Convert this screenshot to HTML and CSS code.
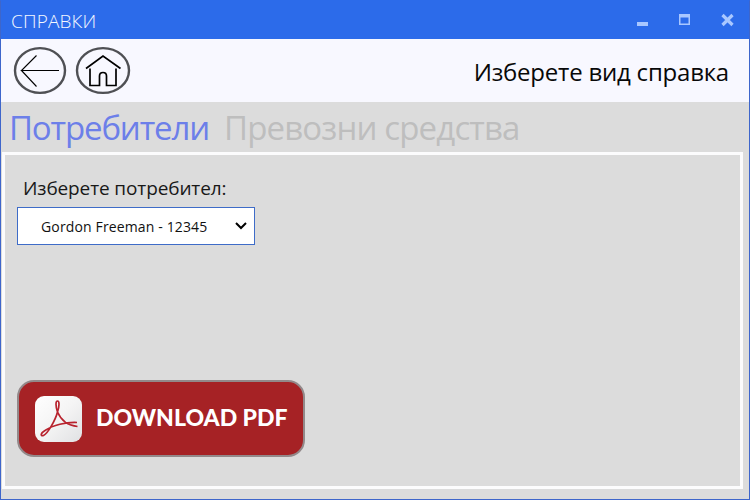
FILE: index.html
```html
<!DOCTYPE html>
<html lang="bg">
<head>
<meta charset="utf-8">
<title>Справки</title>
<link rel="stylesheet" href="styles.css">
</head>
<body>
<div class="window">
  <header class="titlebar">
    <span class="title">СПРАВКИ</span>
    <svg class="controls" width="98" height="16" viewBox="0 0 98 16">
      <path d="M0 9h11v4H0z"/>
      <path fill-rule="evenodd" d="M42 1h11v11H42zM43.500 4.500v6h8v-6z"/>
      <path class="close" d="M85.500 2l10 10M95.500 2l-10 10"/>
    </svg>
  </header>
  <div class="toolbar">
    <svg class="round" width="54" height="50" viewBox="0 0 54 50">
      <ellipse cx="27" cy="24.500" rx="25" ry="22.400"/>
      <path class="thin" d="M46 24.500H8.500L23.500 9.500M8.500 24.500L23.500 40.500"/>
    </svg>
    <svg class="round" width="56" height="50" viewBox="0 0 56 50">
      <ellipse cx="28" cy="24.500" rx="26" ry="22.400"/>
      <path class="house" d="M11 22.500L28 10L45.500 22.500M15 22.500V39.500H24.500V30Q24.500 26.500 28 26.500T31.500 30V39.500H41V22.500"/>
    </svg>
    <h1 class="heading">Изберете вид справка</h1>
  </div>
  <nav class="tabs">
    <span class="tab active">Потребители</span>
    <span class="tab other">Превозни средства</span>
  </nav>
  <main class="panel">
    <div class="label">Изберете потребител:</div>
    <div class="select">
      <span class="value">Gordon Freeman - 12345</span>
      <svg width="12" height="8" viewBox="0 0 12 8"><path d="M1 1l5 5 5-5"/></svg>
    </div>
    <div class="download">
      <svg class="pdf" width="47" height="46" viewBox="0 0 47 46">
        <defs><linearGradient id="tile" x1="0" y1="0" x2="1" y2="1"><stop offset="0" stop-color="#fff"/><stop offset=".5" stop-color="#f4f4f4"/><stop offset="1" stop-color="#e0e1e3"/></linearGradient></defs>
        <rect width="47" height="46" rx="9" fill="url(#tile)"/>
        <path d="M22.500 16C20.500 10 20.500 5 22.500 5S24.500 10 22.500 16C20.500 24 12.500 38 8.500 39.500C5 40.500 5.500 37 10 34.500C18 29 31 26 42 26.500M42.500 30.500C32 29.500 25.500 23 22.500 16"/>
      </svg>
      <span class="download-text">DOWNLOAD PDF</span>
    </div>
  </main>
</div>
</body>
</html>
```
FILE: styles.css
```css
* { box-sizing: border-box; }
body { margin: 0; font-family: "Open Sans", "Noto Sans", sans-serif; }
.window {
  width: 750px; height: 500px; display: flex; flex-direction: column;
  background: #dcdcdc; border: 1px solid #3e66cb; border-top-color: #2c6bea; overflow: hidden;
}
.titlebar {
  height: 38px; flex: none; display: flex; align-items: center; justify-content: space-between;
  padding: 2px 14px 0 10px; background: #2c6bea; color: #f4f8ff;
}
.title { font-size: 19px; line-height: 36px; font-weight: 300; letter-spacing: 0.15px; white-space: nowrap; }
.controls { fill: #a9c7ff; }
.close { stroke: #a9c7ff; stroke-width: 3.2; }
.toolbar {
  height: 63px; flex: none; display: flex; align-items: center; gap: 8px;
  padding: 0 20px 0 12px; background: #f8f8ff;
}
.round { fill: none; stroke: #4f5054; stroke-width: 2.4; }
.round .thin { stroke: #000; stroke-width: 1.1; }
.round .house { stroke: #000; stroke-width: 1.7; }
.heading {
  margin: 2px 0 0 auto; font-size: 24px; line-height: 34px; font-weight: 400;
  letter-spacing: -0.22px; white-space: nowrap; color: #080808;
}
.tabs { height: 50px; flex: none; display: flex; padding: 2px 0 0 8px; gap: 16px; }
.tab { font-size: 33px; line-height: 48px; letter-spacing: -0.85px; white-space: nowrap; color: #bebebe; }
.tab.active { width: 199px; letter-spacing: -1.15px; color: #6c7fe9; }
.panel {
  width: 741px; height: 337px; flex: none; margin-left: 1px; border: 3px solid #fcfcfd;
  padding: 19px 12px 0; display: flex; flex-direction: column; align-items: flex-start;
}
.label { margin-left: 6px; font-size: 19px; line-height: 28px; letter-spacing: -0.12px; white-space: nowrap; color: #181818; }
.select {
  width: 238px; height: 38px; margin-top: 5px; padding: 0 7px 0 23px; display: flex;
  align-items: center; justify-content: space-between; background: #fff; border: 1px solid #3e6cc8;
}
.value { font-size: 14px; letter-spacing: 0.14px; white-space: nowrap; color: #111; }
.select svg { fill: none; stroke: #000; stroke-width: 2; }
.download {
  width: 288px; height: 77px; margin-top: 135px; padding-left: 16px; display: flex; align-items: center;
  gap: 14px; background: #a62225; border: 2px solid #93898a; border-radius: 17px; color: #fff;
}
.pdf path { fill: none; stroke: #b8232e; stroke-width: 1.7; }
.download-text { padding-bottom: 3px; font: 900 23px/30px Lato, sans-serif; letter-spacing: 0; white-space: nowrap; }
```
